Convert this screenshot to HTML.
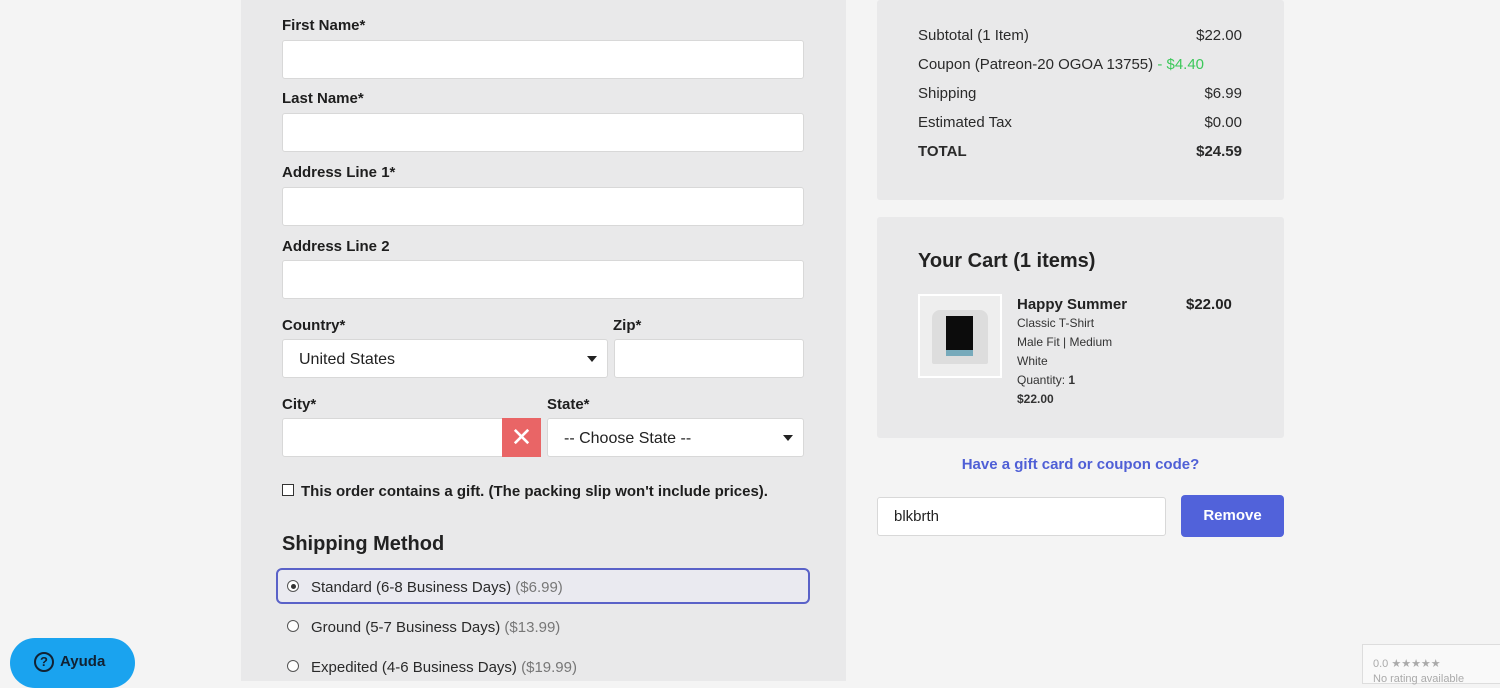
<!DOCTYPE html>
<html><head><style>
*{box-sizing:border-box;margin:0;padding:0}
body{width:1500px;height:681px;background:#f4f4f4;font-family:"Liberation Sans",sans-serif;color:#222;position:relative;overflow:hidden}
.a{position:absolute}
.lp{left:241px;top:0;width:605px;height:681px;background:#e9e9ea}
.lbl{font-weight:bold;font-size:15px;color:#1e1e1e}
.in{background:#fff;border:1px solid #d8d8d8;border-radius:3px;height:39px}
.panel{background:#e9e9ea;border-radius:3px}
.row{left:918px;width:324px;font-size:15px;display:flex;justify-content:space-between;color:#2a2a2a}
.rad{width:12px;height:12px;border:1px solid #555;border-radius:50%;background:#fff}
.sh{font-size:15px;color:#2a2a2a}
.sh span{color:#777}
</style></head><body>
<div class="a lp"></div>
<div class="a lbl" style="left:282px;top:17px">First Name*</div>
<div class="a in" style="left:282px;top:40px;width:522px"></div>
<div class="a lbl" style="left:282px;top:90px">Last Name*</div>
<div class="a in" style="left:282px;top:113px;width:522px"></div>
<div class="a lbl" style="left:282px;top:164px">Address Line 1*</div>
<div class="a in" style="left:282px;top:187px;width:522px"></div>
<div class="a lbl" style="left:282px;top:238px">Address Line 2</div>
<div class="a in" style="left:282px;top:260px;width:522px"></div>
<div class="a lbl" style="left:282px;top:317px">Country*</div>
<div class="a in" style="left:282px;top:339px;width:326px;font-size:16px;padding:11px 16px">United States<span style="position:absolute;right:10px;top:16px;border:5px solid transparent;border-top:6px solid #222"></span></div>
<div class="a lbl" style="left:613px;top:317px">Zip*</div>
<div class="a in" style="left:614px;top:339px;width:190px"></div>
<div class="a lbl" style="left:282px;top:396px">City*</div>
<div class="a in" style="left:282px;top:418px;width:222px;border-radius:3px 0 0 3px"></div>
<div class="a" style="left:502px;top:418px;width:39px;height:39px;background:#e96566;color:#fff;font-size:26px;text-align:center;line-height:38px">✕</div>
<div class="a lbl" style="left:547px;top:396px">State*</div>
<div class="a in" style="left:547px;top:418px;width:257px;font-size:16px;padding:11px 16px">-- Choose State --<span style="position:absolute;right:10px;top:16px;border:5px solid transparent;border-top:6px solid #222"></span></div>
<div class="a" style="left:282px;top:484px;width:12px;height:12px;border:1px solid #333;background:#fff"></div>
<div class="a lbl" style="left:301px;top:483px;font-size:15px">This order contains a gift. (The packing slip won't include prices).</div>
<div class="a" style="left:282px;top:533px;font-size:20px;font-weight:bold;color:#222">Shipping Method</div>
<div class="a" style="left:276px;top:568px;width:534px;height:36px;border:2px solid #5a62c8;border-radius:6px;background:#eaeaf0"></div>
<div class="a rad" style="left:287px;top:580px"><div style="width:5px;height:5px;border-radius:50%;background:#333;margin:2.5px"></div></div>
<div class="a sh" style="left:311px;top:579px">Standard (6-8 Business Days) <span>($6.99)</span></div>
<div class="a rad" style="left:287px;top:620px"></div>
<div class="a sh" style="left:311px;top:619px">Ground (5-7 Business Days) <span>($13.99)</span></div>
<div class="a rad" style="left:287px;top:660px"></div>
<div class="a sh" style="left:311px;top:659px">Expedited (4-6 Business Days) <span>($19.99)</span></div>

<div class="a" style="left:10px;top:638px;width:125px;height:50px;border-radius:25px;background:#1aa3ef;color:#123;font-weight:bold;font-size:15px;padding:14px 0 0 24px"><span style="display:inline-block;width:20px;height:20px;border:2px solid #123;border-radius:50%;text-align:center;font-size:13px;line-height:16px;margin-right:6px">?</span>Ayuda</div>

<div class="a panel" style="left:877px;top:0;width:407px;height:200px"></div>
<div class="a row" style="top:27px"><span>Subtotal (1 Item)</span><span>$22.00</span></div>
<div class="a row" style="top:56px"><span>Coupon (Patreon-20 OGOA 13755) <span style="color:#3cc85a">- $4.40</span></span><span></span></div>
<div class="a row" style="top:85px"><span>Shipping</span><span>$6.99</span></div>
<div class="a row" style="top:114px"><span>Estimated Tax</span><span>$0.00</span></div>
<div class="a row" style="top:143px;font-weight:bold"><span>TOTAL</span><span>$24.59</span></div>

<div class="a panel" style="left:877px;top:217px;width:407px;height:221px"></div>
<div class="a" style="left:918px;top:250px;font-size:20px;font-weight:bold;color:#222">Your Cart (1 items)</div>
<div class="a" style="left:918px;top:294px;width:84px;height:84px;border:2px solid #fff;background:#eee">
<div style="position:absolute;left:12px;top:14px;width:56px;height:54px;background:#ddd;border-radius:8px 8px 2px 2px"></div>
<div style="position:absolute;left:26px;top:20px;width:27px;height:40px;background:#0c0c0c"></div>
<div style="position:absolute;left:26px;top:54px;width:27px;height:6px;background:#7ab"></div></div>
<div class="a" style="left:1017px;top:296px;font-weight:bold;font-size:15px">Happy Summer</div>
<div class="a" style="left:1186px;top:296px;font-weight:bold;font-size:15px">$22.00</div>
<div class="a" style="left:1017px;top:314px;font-size:12px;line-height:19px;color:#333">Classic T-Shirt<br>Male Fit | Medium<br>White<br>Quantity: <b>1</b><br><b>$22.00</b></div>

<div class="a" style="left:877px;top:456px;width:407px;text-align:center;color:#4f5fd6;font-weight:bold;font-size:15px">Have a gift card or coupon code?</div>
<div class="a in" style="left:877px;top:497px;width:289px;font-size:15px;padding:10px 16px">blkbrth</div>
<div class="a" style="left:1181px;top:495px;width:103px;height:42px;background:#5162da;border-radius:4px;color:#fff;font-weight:bold;font-size:15px;text-align:center;line-height:42px">Remove</div>

<div class="a" style="left:1362px;top:644px;width:140px;height:40px;background:#f9f9f9;border:1px solid #ddd;font-size:11px;color:#aaa;padding:12px 0 0 10px;line-height:15px">0.0 ★★★★★<br>No rating available</div>
</body></html>
